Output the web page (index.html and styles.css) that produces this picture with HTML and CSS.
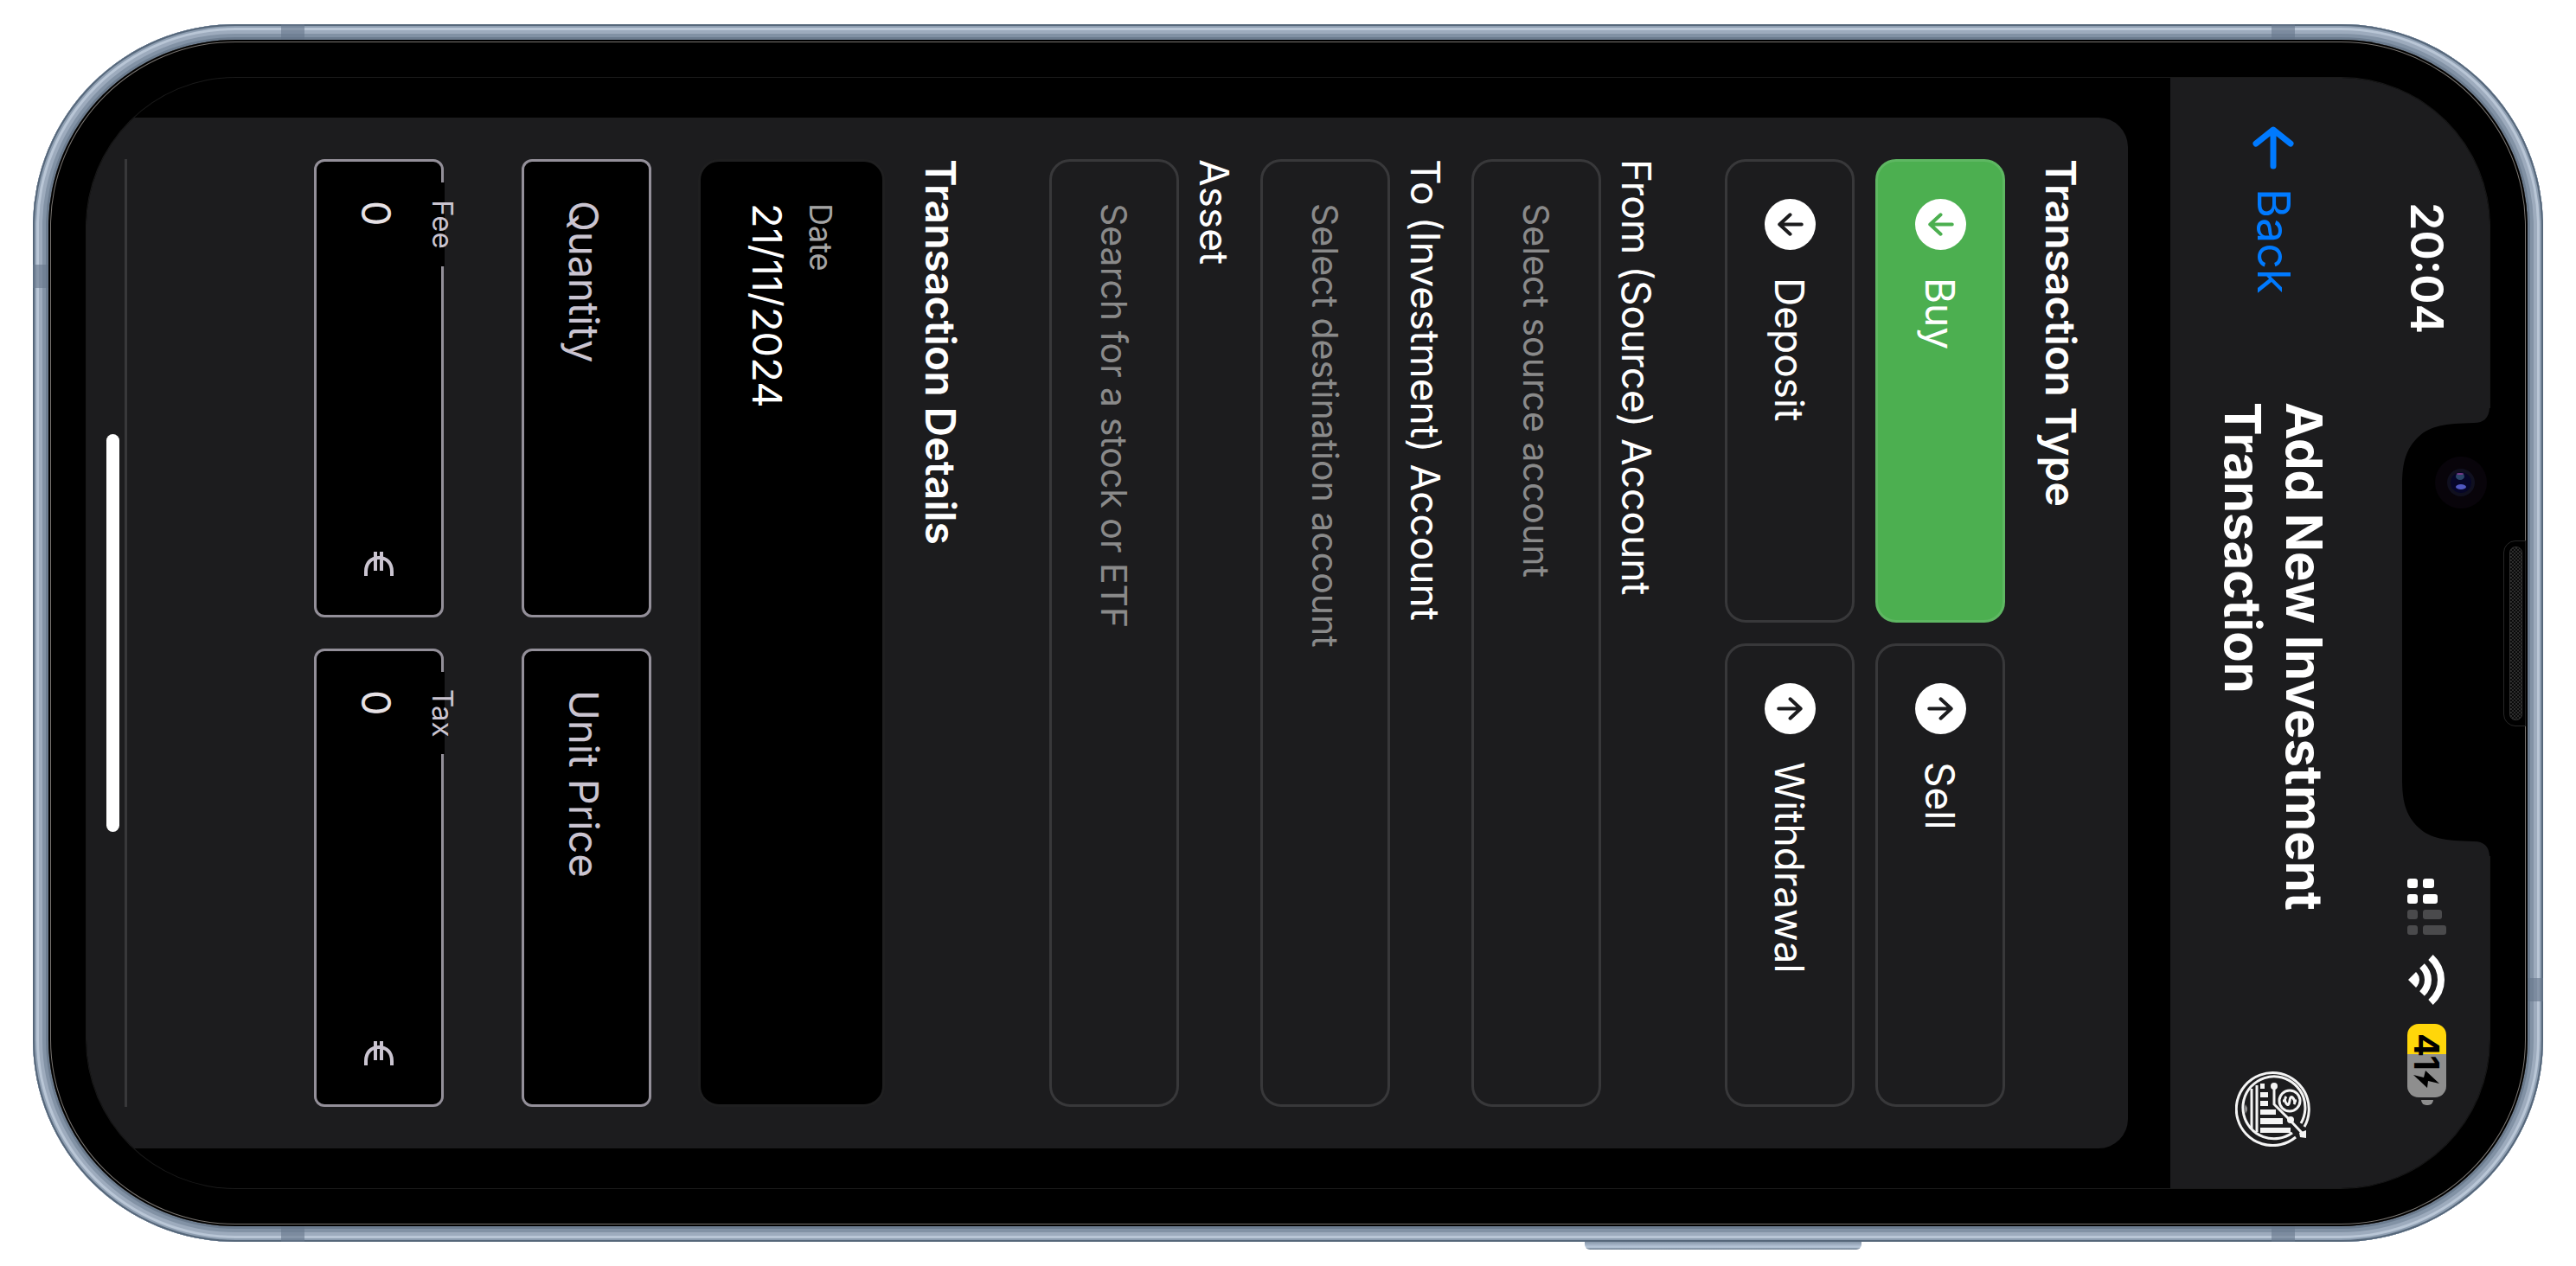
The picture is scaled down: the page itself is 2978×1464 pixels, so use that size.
FILE: index.html
```html
<!DOCTYPE html>
<html lang="en">
<head>
<meta charset="utf-8">
<title>Add New Investment Transaction</title>
<link rel="stylesheet" href="styles.css">
</head>
<body>
<div class="device">
  <span class="antenna antenna-top-right"></span>
  <span class="antenna antenna-bottom-right"></span>
  <span class="antenna antenna-top-left"></span>
  <span class="antenna antenna-bottom-left"></span>
  <span class="antenna antenna-right"></span>
  <span class="antenna antenna-left"></span>
  <span class="side-button"></span>
  <span class="speaker"></span>
  <div class="bezel">
    <div class="screen">
      <div class="status-bar">
        <span class="clock">20:04</span>
        <div class="status-icons">
          <svg class="signal" viewBox="0 0 45 66" aria-hidden="true">
            <g fill="#fff"><rect width="12" height="11" rx="3"/><rect x="18" width="13" height="11" rx="3"/><rect y="18" width="12" height="11" rx="3"/><rect x="18" y="18" width="17" height="11" rx="3"/></g>
            <g fill="#4a4a4c"><rect y="36" width="12" height="11" rx="3"/><rect x="18" y="36" width="22" height="11" rx="3"/><rect y="54" width="12" height="11" rx="3"/><rect x="18" y="54" width="27" height="11" rx="3"/></g>
          </svg>
          <svg class="wifi" viewBox="0 0 42 58" aria-hidden="true">
            <path fill="#fff" d="M0 29L9 20Q13 24 13 29T9 38Z"/>
            <path fill="none" stroke="#fff" stroke-width="8" d="M16 13Q23 20 23 29T16 45M26 3Q38 14 38 29T26 55"/>
          </svg>
          <span class="battery"><span class="battery-level">41</span><svg class="bolt" viewBox="0 0 30 20" aria-hidden="true"><path d="M0 5L16 20L17 12L30 15L14 0L12 8Z"/></svg></span>
        </div>
      </div>
      <header class="header">
        <a class="back" href="#">
          <svg class="back-arrow" viewBox="0 0 48 50" aria-hidden="true"><path d="M4 20L24 4L44 20M24 5V46"/></svg>
          <span>Back</span>
        </a>
        <h1 class="title">Add New Investment Transaction</h1>
        <svg class="logo" viewBox="0 0 88 88" aria-hidden="true">
          <g fill="none" stroke="#f4f4f4">
            <path stroke-width="3" d="M80 65A42 42 0 1 0 70 77"/>
            <path stroke-width="3" d="M76 61A36 36 0 1 0 66 72"/>
            <path stroke-width="3" d="M25 17V71M19 21V67"/>
            <path stroke-width="3" d="M45 18V39L64 58L79 74"/>
            <circle cx="63" cy="35" r="12" stroke-width="3"/>
            <path stroke-width="3" d="M59 30Q56 34 59 38T63 35T67 32T68 39M55 35H58M68 35H71"/>
          </g>
          <g fill="#f4f4f4">
            <rect x="29" y="15" width="5" height="6"/><rect x="29" y="25" width="9" height="6"/><rect x="29" y="35" width="9" height="6"/><rect x="29" y="45" width="18" height="6"/><rect x="29" y="55" width="26" height="7"/><rect x="29" y="66" width="35" height="6"/>
            <circle cx="45" cy="18" r="4"/><circle cx="64" cy="57" r="4"/><path d="M74 72L82 69V78L75 77Z"/><path d="M12 39L14 43V46L12 50Q10 44 12 39Z" opacity=".5"/>
          </g>
        </svg>
      </header>
      <main class="card">
        <h2 class="section-title">Transaction Type</h2>
        <div class="types">
          <button class="type type-active" type="button" aria-pressed="true">
            <svg class="type-icon" viewBox="0 0 58 58" aria-hidden="true"><circle cx="29" cy="29" r="29"/><path d="M42 29H17M29 18L17 29L29 40"/></svg>
            Buy
          </button>
          <button class="type" type="button">
            <svg class="type-icon" viewBox="0 0 58 58" aria-hidden="true"><circle cx="29" cy="29" r="29"/><path d="M16 29H41M29 18L41 29L29 40"/></svg>
            Sell
          </button>
          <button class="type" type="button">
            <svg class="type-icon" viewBox="0 0 58 58" aria-hidden="true"><circle cx="29" cy="29" r="29"/><path d="M42 29H17M29 18L17 29L29 40"/></svg>
            Deposit
          </button>
          <button class="type" type="button">
            <svg class="type-icon" viewBox="0 0 58 58" aria-hidden="true"><circle cx="29" cy="29" r="29"/><path d="M16 29H41M29 18L41 29L29 40"/></svg>
            Withdrawal
          </button>
        </div>
        <div class="fields">
          <div class="field">
            <label class="field-label" for="source">From (Source) Account</label>
            <input class="field-input" id="source" type="text" placeholder="Select source account">
          </div>
          <div class="field">
            <label class="field-label" for="destination">To (Investment) Account</label>
            <input class="field-input" id="destination" type="text" placeholder="Select destination account">
          </div>
          <div class="field">
            <label class="field-label" for="asset">Asset</label>
            <input class="field-input" id="asset" type="text" placeholder="Search for a stock or ETF">
          </div>
        </div>
        <h2 class="section-title details-title">Transaction Details</h2>
        <div class="date-box">
          <label class="date-label" for="date">Date</label>
          <input class="date-input" id="date" type="text" value="21/11/2024">
        </div>
        <div class="pair">
          <div class="outlined">
            <label class="outlined-label" for="quantity">Quantity</label>
            <input class="outlined-input" id="quantity" type="text">
          </div>
          <div class="outlined">
            <label class="outlined-label" for="price">Unit Price</label>
            <input class="outlined-input" id="price" type="text">
          </div>
        </div>
        <div class="pair pair-costs">
          <div class="outlined">
            <label class="floating-label" for="fee">Fee</label>
            <input class="outlined-input" id="fee" type="text" value="0">
            <svg class="euro" viewBox="0 0 34 28" aria-hidden="true"><path d="M2 28V23C2 13 8 7 17 7S32 13 32 23V28M13 0V22M20 0V22"/></svg>
          </div>
          <div class="outlined">
            <label class="floating-label" for="tax">Tax</label>
            <input class="outlined-input" id="tax" type="text" value="0">
            <svg class="euro" viewBox="0 0 34 28" aria-hidden="true"><path d="M2 28V23C2 13 8 7 17 7S32 13 32 23V28M13 0V22M20 0V22"/></svg>
          </div>
        </div>
        <hr class="divider">
      </main>
      <span class="home-indicator"></span>
    </div>
    <svg class="notch" viewBox="0 0 103 518" aria-hidden="true">
      <path d="M103 0H102Q101 17 84 17C50 18 34 20 20 33C4 48 1 66 1 90V428C1 452 4 470 20 485C34 498 50 500 84 501Q101 501 102 518H103Z"/>
      <circle cx="69" cy="86" r="30" fill="#08040a"/>
      <circle cx="69" cy="86" r="16" fill="#10101f"/>
      <circle cx="69" cy="86" r="12" fill="#060628"/>
      <ellipse cx="68" cy="79" rx="5" ry="4" fill="#2a4468"/>
      <ellipse cx="68" cy="76" rx="4" ry="1" fill="#7a3a8a"/>
      <ellipse cx="69" cy="91" rx="6" ry="3" fill="#5058c0"/>
    </svg>
  </div>
</div>
</body>
</html>
```
FILE: styles.css
```css
* {
  box-sizing: border-box;
}

html {
  height: 100%;
  background: #fff;
}

body {
  display: flex;
  min-width: 100vw;
  height: 100%;
  margin: 0;
  padding: 28px 38px;
  writing-mode: vertical-rl;
  font-family: Inter, "Liberation Sans", sans-serif;
  font-size: 46px;
  line-height: 60px;
  color: #fff;
}

h1,
h2 {
  margin: 0;
}

button,
input {
  font: inherit;
  color: inherit;
  writing-mode: inherit;
}

svg {
  display: block;
  flex: none;
}

/* Phone body */

.device {
  position: relative;
  display: flex;
  flex: 1;
  flex-direction: column;
  padding: 18px;
  border-radius: 234px;
  background: #7d8da0;
  box-shadow:
    inset 0 0 0 2px #56677a,
    inset 0 0 0 4px #8f9fb2,
    inset 0 0 0 7px #b9c6d6,
    inset 0 0 0 11px #9dabbd,
    inset 0 0 0 15px #8292a5,
    inset 0 0 0 18px #6c7c8f;
}

.bezel {
  position: relative;
  display: flex;
  flex: 1;
  flex-direction: column;
  padding: 44px;
  border-radius: 216px;
  background: #000;
  box-shadow: inset 0 0 0 2px #000, inset 0 0 0 3px #77736f;
}

.screen {
  position: relative;
  display: flex;
  flex: 1;
  flex-direction: column;
  overflow: hidden;
  border-radius: 172px;
  background: #000;
  box-shadow: 0 0 0 1px #1a1a1a;
}

.antenna {
  position: absolute;
  width: 27px;
  height: 18px;
  background: #65778a99;
}

.antenna-top-right { top: 0; right: 287px; }
.antenna-bottom-right { bottom: 0; right: 287px; }
.antenna-top-left { top: 0; left: 287px; }
.antenna-bottom-left { bottom: 0; left: 287px; }

.antenna-right,
.antenna-left {
  width: 18px;
  height: 27px;
}

.antenna-right { right: 0; bottom: 278px; }
.antenna-left { left: 0; top: 278px; }

.side-button {
  position: absolute;
  right: 788px;
  bottom: -9px;
  width: 320px;
  height: 9px;
  border-radius: 0 0 6px 6px;
  background: linear-gradient(#8797aa, #b9c8da 70%, #5f7083);
}

.speaker {
  position: absolute;
  z-index: 1;
  top: 597px;
  right: 20px;
  width: 26px;
  height: 215px;
  border: 1px solid #262626;
  border-radius: 14px 0 0 14px;
  background: #000;
}

.speaker::before {
  content: "";
  position: absolute;
  inset: 6px 3px 6px 6px;
  border: 1px solid #303030;
  border-radius: 7px;
  background: repeating-conic-gradient(#2c2c2c 0 25%, #0a0a0a 0 50%) 0 0 / 4px 4px;
}

.notch {
  position: absolute;
  top: 426px;
  right: 43px;
  width: 103px;
  height: 518px;
}

/* Status bar */

.status-bar {
  display: flex;
  align-items: center;
  justify-content: space-between;
  block-size: 131px;
  padding-block-start: 15px;
  padding-inline: 144px 105px;
  background: #1c1c1e;
}

.clock {
  font-size: 52px;
  font-weight: 600;
}

.status-icons {
  display: flex;
  align-items: center;
  gap: 22px;
}

.signal { width: 45px; height: 66px; }
.wifi { width: 42px; height: 58px; }

.battery {
  position: relative;
  display: flex;
  align-items: center;
  justify-content: center;
  width: 45px;
  height: 85px;
  border-radius: 13px;
  background: linear-gradient(#ffd60a 35px, #8e8e8e 35px);
  color: #000;
}

.battery::after {
  content: "";
  position: absolute;
  top: 88px;
  left: 16px;
  width: 14px;
  height: 6px;
  border-radius: 0 0 7px 7px;
  background: #8e8e8e;
}

.battery-level {
  font-size: 40px;
  font-weight: 700;
  line-height: 45px;
}

.bolt { width: 30px; height: 20px; }

/* Header */

.header {
  display: grid;
  grid-template-columns: 327px 1fr 88px;
  align-items: center;
  block-size: 238px;
  padding-inline: 48px;
  background: #1c1c1e;
}

.back {
  display: flex;
  align-items: center;
  gap: 22px;
  padding-inline-start: 8px;
  font-size: 52px;
  color: #007aff;
  text-decoration: none;
}

.back-arrow {
  width: 48px;
  height: 50px;
  fill: none;
  stroke: #007aff;
  stroke-width: 7;
  stroke-linecap: round;
  stroke-linejoin: round;
}

.title {
  font-size: 58px;
  font-weight: 700;
  line-height: 71px;
}

.logo { width: 88px; height: 88px; }

/* Form */

.card {
  flex: 1;
  margin-block-start: 49px;
  margin-inline: 46px;
  padding: 48px 48px 48px 0;
  border-start-start-radius: 34px;
  border-start-end-radius: 34px;
  background: #1c1c1e;
}

.section-title {
  font-size: 48px;
  font-weight: 600;
}

.types {
  display: grid;
  grid-template-columns: repeat(2, minmax(0, 1fr));
  gap: 24px;
  margin-block: 34px 73px;
}

.type {
  display: flex;
  align-items: center;
  gap: 32px;
  block-size: 150px;
  padding: 0;
  padding-inline: 43px;
  border: 3px solid #38383a;
  border-radius: 24px;
  background: none;
}

.type-active {
  border-color: #5eb762;
  background: #4caf50;
}

.type-icon {
  width: 59px;
  height: 59px;
  fill: #fff;
  stroke: #1c1c1e;
  stroke-width: 4;
  stroke-linecap: round;
  stroke-linejoin: round;
}

.type-icon circle { stroke: none; }
.type-icon path { fill: none; }
.type-active .type-icon { stroke: #4caf50; }

.fields {
  display: flex;
  flex-direction: column;
  gap: 24px;
}

.field {
  display: flex;
  flex-direction: column;
  gap: 12px;
}

.field-label {
  line-height: 58px;
}

.field-input {
  inline-size: 100%;
  block-size: 150px;
  margin: 0;
  padding: 0;
  padding-inline: 48px;
  border: 3px solid #38383a;
  border-radius: 24px;
  background: none;
  font-size: 41px;
}

.field-input::placeholder {
  color: #8a8a8a;
  opacity: 1;
}

.details-title {
  margin-block: 96px 34px;
}

.date-box {
  display: flex;
  flex-direction: column;
  justify-content: center;
  gap: 8px;
  block-size: 216px;
  padding-inline: 48px;
  border: 3px solid #1f1f20;
  border-radius: 24px;
  background: #000;
}

.date-label {
  font-size: 36px;
  line-height: 48px;
  color: #a5a5a5;
}

.date-input {
  margin: 0;
  padding: 0;
  border: 0;
  background: none;
  font-size: 47px;
}

.pair {
  display: grid;
  grid-template-columns: repeat(2, minmax(0, 1fr));
  gap: 36px;
  margin-block-start: 54px;
  font-size: 47px;
}

.pair-costs {
  margin-block-start: 90px;
}

.outlined {
  position: relative;
  display: flex;
  align-items: center;
  block-size: 150px;
  padding-inline: 45px;
  border: 3px solid #938f99;
  border-radius: 12px;
  background: #000;
  color: #cac4d0;
}

.outlined-input {
  flex: 1;
  inline-size: 100%;
  min-inline-size: 0;
  margin: 0;
  padding: 0;
  padding-block-start: 6px;
  border: 0;
  background: none;
  color: #e6e1e5;
}

.outlined-label {
  position: absolute;
  inset-block-start: 3px;
  inset-inline-start: 45px;
  line-height: 144px;
}

.floating-label {
  position: absolute;
  inset-block-start: -23px;
  inset-inline-start: 24px;
  padding-inline: 20px;
  background: linear-gradient(to left, transparent 19px, #000 19px);
  font-size: 33px;
  line-height: 42px;
}

.euro {
  width: 34px;
  height: 28px;
  fill: none;
  stroke: #cac4d0;
  stroke-width: 4;
}

.divider {
  block-size: 3px;
  margin: 0;
  margin-block-start: 216px;
  border: 0;
  background: #38383a;
}

.home-indicator {
  position: absolute;
  top: 412px;
  bottom: 412px;
  left: 23px;
  width: 15px;
  border-radius: 8px;
  background: #fff;
}
```
